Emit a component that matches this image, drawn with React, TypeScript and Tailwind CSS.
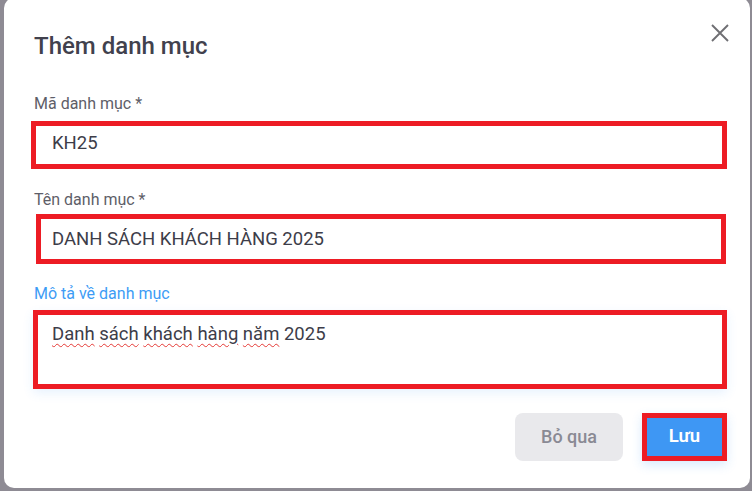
import { useState } from "react";

const squiggle =
  "underline decoration-wavy decoration-[#e53935] decoration-1 underline-offset-[3px]";

const CategoryDialog = () => {
  const [code] = useState("KH25");
  const [name] = useState("DANH SÁCH KHÁCH HÀNG 2025");

  return (
    <div className="relative ml-[4px] mt-[-2px] w-[746px] rounded-[10px] bg-white pl-[30px] pr-[23px] pt-[34px] pb-[27px]">
      <button className="absolute right-[21px] top-[26px] h-[18px] w-[18px]">
        <svg width="18" height="18" viewBox="0 0 18 18" fill="none">
          <path d="M1 1L17 17M17 1L1 17" stroke="#6f6f73" strokeWidth="1.9" />
        </svg>
      </button>

      <h2 className="text-[24px] leading-[28px] font-medium text-[#41414d]">
        Thêm danh mục
      </h2>

      {/* Mã danh mục */}
      <div className="mt-[34px] text-[16px] leading-[20px] text-[#5e5e68]">
        Mã danh mục *
      </div>
      <div className="mt-[6.5px] ml-[-3px] h-[48px] w-[696px] border-[5px] border-[#ed1c24] pl-[16px] pt-[5px] text-[18.5px] leading-[24px] text-[#3d3d49]">
        {code}
      </div>

      {/* Tên danh mục */}
      <div className="mt-[21.5px] text-[16px] leading-[20px] text-[#5e5e68]">
        Tên danh mục *
      </div>
      <div className="mt-[3.5px] ml-[2px] h-[50px] w-[690px] border-[5px] border-[#ed1c24] pl-[11px] pt-[8px] text-[18.5px] leading-[24px] text-[#3d3d49]">
        {name}
      </div>

      {/* Mô tả */}
      <div className="mt-[20.5px] text-[16px] leading-[20px] text-[#3d9cf5]">
        Mô tả về danh mục
      </div>
      <div className="mt-[5.5px] ml-[-1px] h-[79px] w-[694px] border-[5px] border-[#ed1c24] pl-[14px] pt-[7px] text-[18.5px] leading-[24px] text-[#3d3d49] shadow-[0_4px_10px_rgba(61,151,244,0.12)]">
        <span className={squiggle}>Danh</span>{" "}
        <span className={squiggle}>sách</span>{" "}
        <span className={squiggle}>khách</span>{" "}
        <span className={squiggle}>hàng</span>{" "}
        <span className={squiggle}>năm</span> 2025
      </div>

      <div className="mt-[24px] flex justify-end gap-[19px]">
        <button className="h-[48px] w-[108px] rounded-lg bg-[#e9e9ec] text-[18px] font-medium text-[#8a8a94]">
          Bỏ qua
        </button>
        <button className="h-[48px] w-[85px] border-[5px] border-[#ed1c24] bg-[#3e97f4] text-[18.5px] font-semibold text-white shadow-[0_4px_10px_rgba(61,151,244,0.2)]">
          Lưu
        </button>
      </div>
    </div>
  );
};

export default function App() {
  return (
    <div
      className="h-[491px] w-[752px] overflow-hidden bg-[#8e8b94]"
      style={{ fontFamily: "Roboto, 'Noto Sans', sans-serif" }}
    >
      <CategoryDialog />
    </div>
  );
}
